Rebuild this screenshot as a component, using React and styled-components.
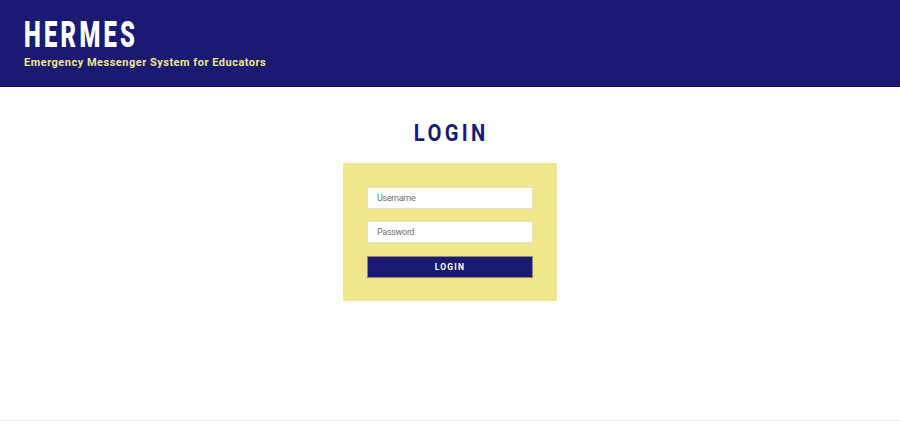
import React from "react";
import styled, { createGlobalStyle } from "styled-components";

const Global = createGlobalStyle`
  body {
    margin: 0;
    background: #fff;
    font-family: "Roboto", "Liberation Sans", sans-serif;
  }
`;

const Cabecera = styled.header`
  height: 87px;
  background: #1b1a72;
  border-bottom: 1px solid #0c0c3a;
  padding: 0 24px;
  box-sizing: border-box;
  display: flex;
  flex-direction: column;
  justify-content: center;
  align-items: flex-start;
`;
const Marca = styled.h1`
  margin: 0;
  color: #fff;
  font-size: 36px;
  line-height: 36px;
  font-weight: 900;
  letter-spacing: 5px;
  transform: scaleX(0.66);
  transform-origin: left center;
`;
const Lema = styled.div`
  color: #f0e68c;
  font-size: 11px;
  font-weight: 700;
  letter-spacing: 0.5px;
  margin-top: 3px;
`;
const Principal = styled.main`
  height: 333px;
  display: flex;
  flex-direction: column;
  align-items: center;
`;
const Titulo = styled.h2`
  margin: 32px 0 16px;
  color: #1b1a72;
  font-size: 24px;
  line-height: 28px;
  font-weight: 700;
  letter-spacing: 4px;
  padding-left: 4px;
  transform: scaleX(0.84);
`;
const Panel = styled.form`
  width: 214px;
  box-sizing: border-box;
  padding: 24px 24px 23px;
  background: #f0e68c;
  display: flex;
  flex-direction: column;
  gap: 12px;
`;
const Campo = styled.input`
  height: 22px;
  box-sizing: border-box;
  border: 1px solid #e2e0cc;
  background: #fff;
  padding: 0 9px;
  font-family: inherit;
  font-size: 9px;
  letter-spacing: -0.3px;
  color: #333;
  outline: 0;
  &::placeholder {
    color: #6f6f6f;
  }
`;
const Boton = styled.button`
  height: 22px;
  margin-top: 1px;
  background: #1b1a72;
  border: 1px solid #8c8a70;
  color: #fff;
  font-family: inherit;
  font-size: 8.5px;
  font-weight: 700;
  letter-spacing: 1.2px;
  cursor: pointer;
`;
const Pie = styled.footer`
  border-top: 1px solid #e6e6e6;
`;

export default function App() {
  return (
    <>
      <Global />
      <Cabecera>
        <Marca>HERMES</Marca>
        <Lema>Emergency Messenger System for Educators</Lema>
      </Cabecera>
      <Principal>
        <Titulo>LOGIN</Titulo>
        <Panel onSubmit={(e) => e.preventDefault()}>
          <Campo placeholder="Username" />
          <Campo type="password" placeholder="Password" />
          <Boton type="submit">LOGIN</Boton>
        </Panel>
      </Principal>
      <Pie />
    </>
  );
}
